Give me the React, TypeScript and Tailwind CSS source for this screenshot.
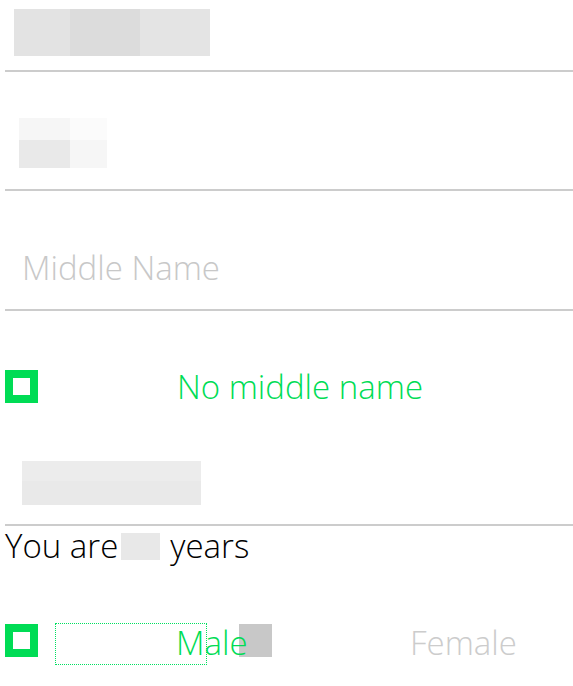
import React from 'react';

const GREEN = 'text-[#00dc55]';

const Checkbox = () => (
  <div className="w-[33px] h-[33px] border-[8px] border-[#00dc55] bg-white shrink-0" />
);

export default function App() {
  return (
    <div className="w-[573px] h-[686px] bg-white overflow-hidden font-['Open_Sans',sans-serif] font-light text-[33px] leading-none">
      {/* first name (redacted) */}
      <div className="ml-[5px] h-[72px] border-b-2 border-[#cccccc] pl-[9px] pt-[9px]">
        <div className="flex h-[47px]">
          <div className="w-[56px] bg-[#e3e3e3]" />
          <div className="w-[70px] bg-[#dcdcdc]" />
          <div className="w-[70px] bg-[#e4e4e4]" />
        </div>
      </div>

      {/* last name (redacted) */}
      <div className="ml-[5px] h-[119px] border-b-2 border-[#cccccc] pl-[14px] pt-[46px]">
        <div className="grid grid-cols-[51px_37px] grid-rows-[22px_28px] w-[88px]">
          <div className="bg-[#f6f6f6]" />
          <div className="bg-[#fbfbfb]" />
          <div className="bg-[#e9e9e9]" />
          <div className="bg-[#f6f6f6]" />
        </div>
      </div>

      {/* middle name */}
      <div className="ml-[5px] h-[120px] border-b-2 border-[#cccccc] flex items-end pb-[25px] pl-[17px]">
        <span className="text-[#c8c8c8]">Middle Name</span>
      </div>

      <div className="flex items-center ml-[5px] mt-[59px] h-[33px]">
        <Checkbox />
        <span className={`ml-[139px] ${GREEN}`}>No middle name</span>
      </div>

      {/* birthday (redacted) */}
      <div className="ml-[5px] h-[123px] border-b-2 border-[#cccccc] pl-[17px] pt-[58px]">
        <div className="flex flex-col w-[179px] h-[44px]">
          <div className="h-[20px] bg-[#ececec]" />
          <div className="flex-1 bg-[#e9e9e9]" />
        </div>
      </div>

      <div className="flex items-start pl-[5px] h-[40px] text-black">
        <span className="mt-[3px]">You are</span>
        <span className="w-[39px] h-[27px] mt-[7px] bg-[#e8e8e8] ml-[3px] mr-[10px]" />
        <span className="mt-[3px]">years</span>
      </div>

      <div className="flex items-start ml-[5px] mt-[58px]">
        <Checkbox />
        <div className="relative ml-[18px] w-[150px] h-[40px] outline-1 outline-dotted outline-[#00e060]">
          <span className={`absolute left-[120px] top-[2px] ${GREEN}`}>Male</span>
        </div>
        <div className="w-[33px] h-[33px] bg-[#c8c8c8] ml-[33px]" />
        <span className="ml-[138px] mt-[2px] text-[#cccccc]">Female</span>
      </div>
    </div>
  );
}
